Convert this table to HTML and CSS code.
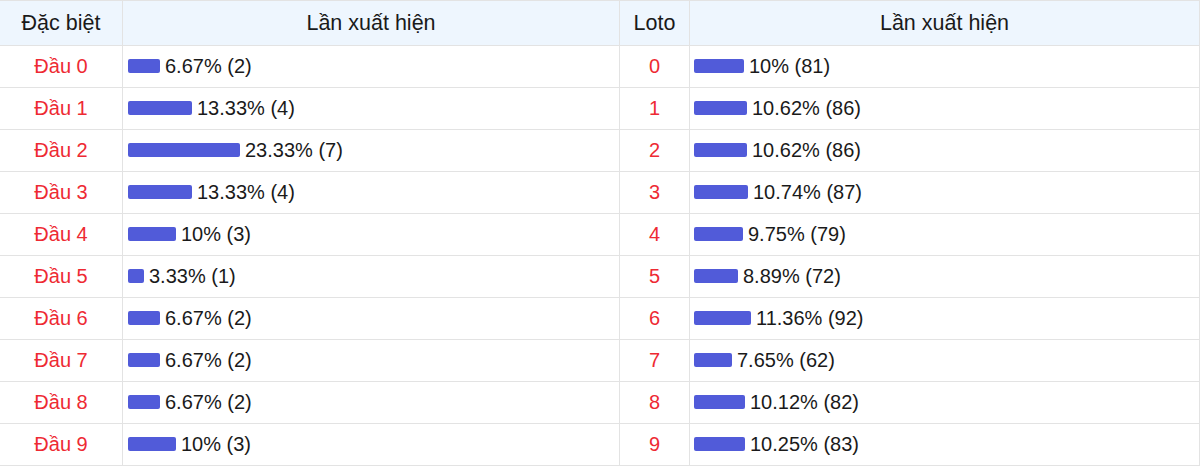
FILE: index.html
```html
<!DOCTYPE html>
<html lang="vi">
<head>
<meta charset="utf-8">
<link rel="stylesheet" href="styles.css">
</head>
<body>
<table class="stats">
  <thead>
    <tr>
      <th class="c-head">Đặc biệt</th>
      <th class="c-bar1">Lần xuất hiện</th>
      <th class="c-loto">Loto</th>
      <th class="c-bar2">Lần xuất hiện</th>
    </tr>
  </thead>
  <tbody>
    <tr><td class="num">Đầu 0</td><td><div class="cell"><span class="bar" style="width:32px"></span>6.67% (2)</div></td><td class="num">0</td><td class="last"><div class="cell"><span class="bar" style="width:50px"></span>10% (81)</div></td></tr>
    <tr><td class="num">Đầu 1</td><td><div class="cell"><span class="bar" style="width:64px"></span>13.33% (4)</div></td><td class="num">1</td><td class="last"><div class="cell"><span class="bar" style="width:53px"></span>10.62% (86)</div></td></tr>
    <tr><td class="num">Đầu 2</td><td><div class="cell"><span class="bar" style="width:112px"></span>23.33% (7)</div></td><td class="num">2</td><td class="last"><div class="cell"><span class="bar" style="width:53px"></span>10.62% (86)</div></td></tr>
    <tr><td class="num">Đầu 3</td><td><div class="cell"><span class="bar" style="width:64px"></span>13.33% (4)</div></td><td class="num">3</td><td class="last"><div class="cell"><span class="bar" style="width:54px"></span>10.74% (87)</div></td></tr>
    <tr><td class="num">Đầu 4</td><td><div class="cell"><span class="bar" style="width:48px"></span>10% (3)</div></td><td class="num">4</td><td class="last"><div class="cell"><span class="bar" style="width:49px"></span>9.75% (79)</div></td></tr>
    <tr><td class="num">Đầu 5</td><td><div class="cell"><span class="bar" style="width:16px"></span>3.33% (1)</div></td><td class="num">5</td><td class="last"><div class="cell"><span class="bar" style="width:44px"></span>8.89% (72)</div></td></tr>
    <tr><td class="num">Đầu 6</td><td><div class="cell"><span class="bar" style="width:32px"></span>6.67% (2)</div></td><td class="num">6</td><td class="last"><div class="cell"><span class="bar" style="width:57px"></span>11.36% (92)</div></td></tr>
    <tr><td class="num">Đầu 7</td><td><div class="cell"><span class="bar" style="width:32px"></span>6.67% (2)</div></td><td class="num">7</td><td class="last"><div class="cell"><span class="bar" style="width:38px"></span>7.65% (62)</div></td></tr>
    <tr><td class="num">Đầu 8</td><td><div class="cell"><span class="bar" style="width:32px"></span>6.67% (2)</div></td><td class="num">8</td><td class="last"><div class="cell"><span class="bar" style="width:51px"></span>10.12% (82)</div></td></tr>
    <tr><td class="num">Đầu 9</td><td><div class="cell"><span class="bar" style="width:48px"></span>10% (3)</div></td><td class="num">9</td><td class="last"><div class="cell"><span class="bar" style="width:51px"></span>10.25% (83)</div></td></tr>
  </tbody>
</table>
</body>
</html>
```

FILE: styles.css
```css
html, body {
  margin: 0;
  padding: 0;
  background: #ffffff;
}

body {
  font-family: "Liberation Sans", Arial, sans-serif;
  font-size: 18px;
  color: #1a1a1a;
}

.stats {
  width: 1200px;
  border-collapse: collapse;
  table-layout: fixed;
  font-family: "Liberation Sans", Arial, sans-serif;
}

.stats th,
.stats td {
  border: 1px solid #e3e3e3;
  padding: 0 5px;
}

.stats tr > :first-child {
  border-left: none;
}

.stats th {
  background: #eef6fe;
  font-weight: normal;
  font-size: 21.5px;
  height: 44px;
  text-align: center;
  color: #1a1a1a;
}

.stats td {
  height: 40px;
  padding-bottom: 1px;
  font-size: 20px;
  color: #1a1a1a;
}

.stats td.last {
  padding-left: 4px;
}

.c-head { width: 112px; }
.c-bar1 { width: 486px; }
.c-loto { width: 59px; }
.c-bar2 { width: auto; }

.stats td.num {
  text-align: center;
  color: #ee2a33;
}

.cell {
  display: flex;
  align-items: center;
}

.bar {
  display: inline-block;
  height: 14px;
  background: #515bd9;
  border-radius: 2px;
  margin-right: 5px;
  flex: none;
}
```
